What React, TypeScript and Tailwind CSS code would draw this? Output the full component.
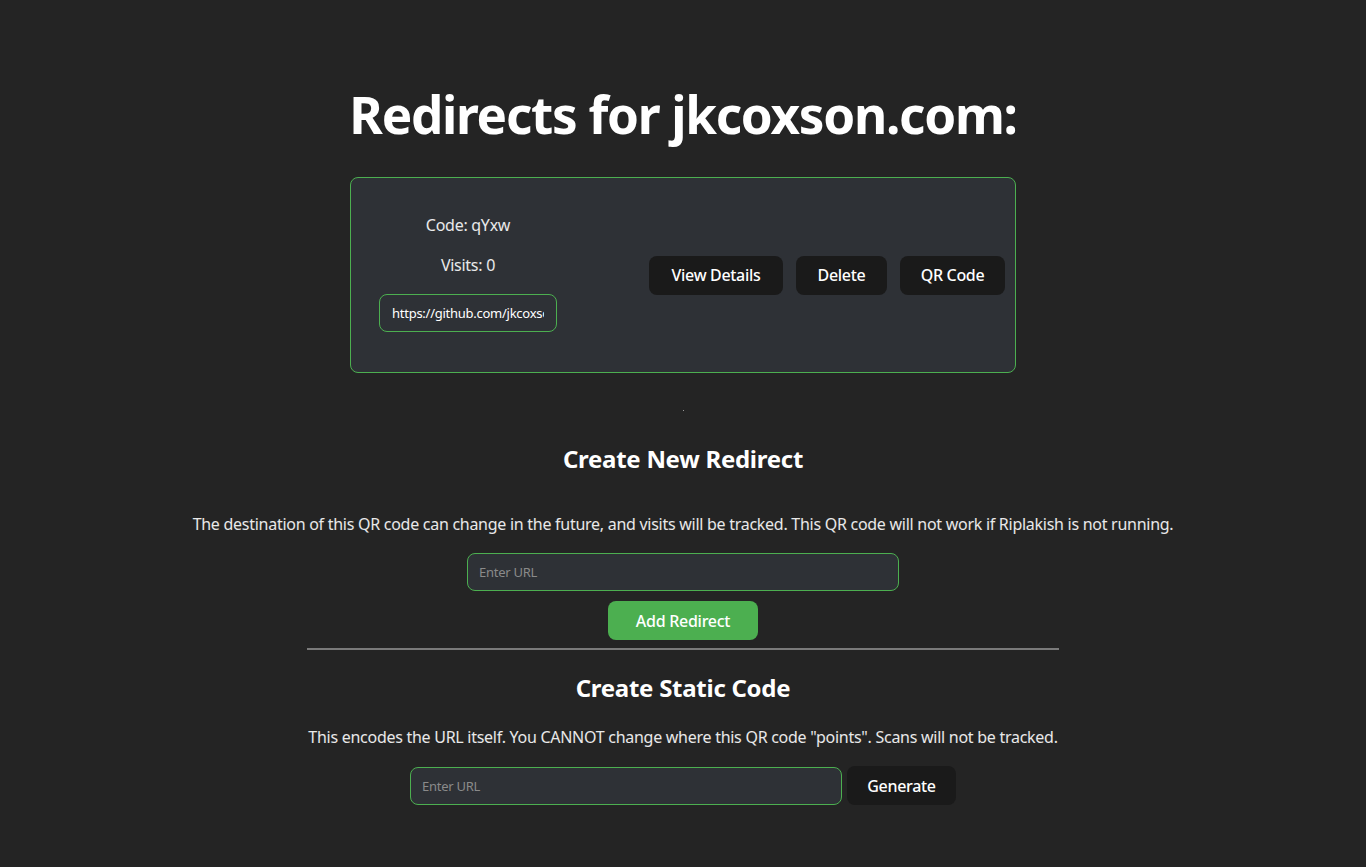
import React from 'react';

const font = { fontFamily: '"Noto Sans", "Open Sans", sans-serif' };

function Btn({ label, className }: { label: string; className: string }) {
  return (
    <button
      type="button"
      className={`h-[39px] rounded-lg bg-[#1a1a1a] text-base font-medium tracking-[-0.02em] text-white ${className}`}
    >
      {label}
    </button>
  );
}

export default function App() {
  return (
    <div style={font} className="min-h-screen bg-[#242424] text-center tracking-[-0.017em] text-white/90">
      <div className="flex flex-col items-center pt-[86px]">
        <h1 className="text-[51.2px] font-bold leading-[56px] tracking-[-0.025em] text-white">Redirects for jkcoxson.com:</h1>

        {/* redirect list */}
        <div className="mt-[35px] flex h-[196px] w-[666px] items-center justify-between rounded-lg border border-[#4caf50] bg-[#2e3136] pr-[10px]">
          <div className="flex w-[234px] flex-col items-center pb-[6px]">
            <p className="text-base leading-6">Code: qYxw</p>
            <p className="mt-4 text-base leading-6">Visits: 0</p>
            <input
              readOnly
              value="https://github.com/jkcoxson"
              className="mt-[17px] h-[38px] w-[178px] rounded-lg border border-[#4caf50] bg-[#2e3136] px-3 text-[13px] tracking-[-0.02em] text-white outline-none"
            />
          </div>
          <div className="flex items-center gap-[13px]">
            <Btn label="View Details" className="w-[134px]" />
            <Btn label="Delete" className="w-[91px]" />
            <Btn label="QR Code" className="w-[105px]" />
          </div>
        </div>

        <div className="mt-[37px] h-[1px] w-[1px] bg-[#9a9a9a]" />

        <h2 className="mt-[30px] text-2xl font-bold leading-9 text-white">Create New Redirect</h2>
        <p className="mt-[35px] text-base leading-6">
          The destination of this QR code can change in the future, and visits will be tracked. This QR code will not work if Riplakish is not running.
        </p>
        <input
          placeholder="Enter URL"
          className="mt-[17px] h-[38px] w-[432px] rounded-lg border border-[#4caf50] bg-[#2e3136] px-[11px] text-[13px] text-white outline-none placeholder:text-[#8a8a8a]"
        />
        <button
          type="button"
          className="mt-[10px] h-[39px] w-[150px] rounded-lg bg-[#4caf50] text-base font-medium text-white"
        >
          Add Redirect
        </button>
        <div className="mt-[8px] h-[2px] w-[752px] bg-[#7a7a7a]" />

        <h2 className="mt-[20px] text-2xl font-bold leading-9 text-white">Create Static Code</h2>
        <p className="mt-[19px] text-base leading-6">
          This encodes the URL itself. You CANNOT change where this QR code "points". Scans will not be tracked.
        </p>
        <div className="mt-[17px] flex items-center gap-[5px]">
          <input
            placeholder="Enter URL"
            className="h-[38px] w-[432px] rounded-lg border border-[#4caf50] bg-[#2e3136] px-[11px] text-[13px] text-white outline-none placeholder:text-[#8a8a8a]"
          />
          <Btn label="Generate" className="w-[109px]" />
        </div>
      </div>
    </div>
  );
}
